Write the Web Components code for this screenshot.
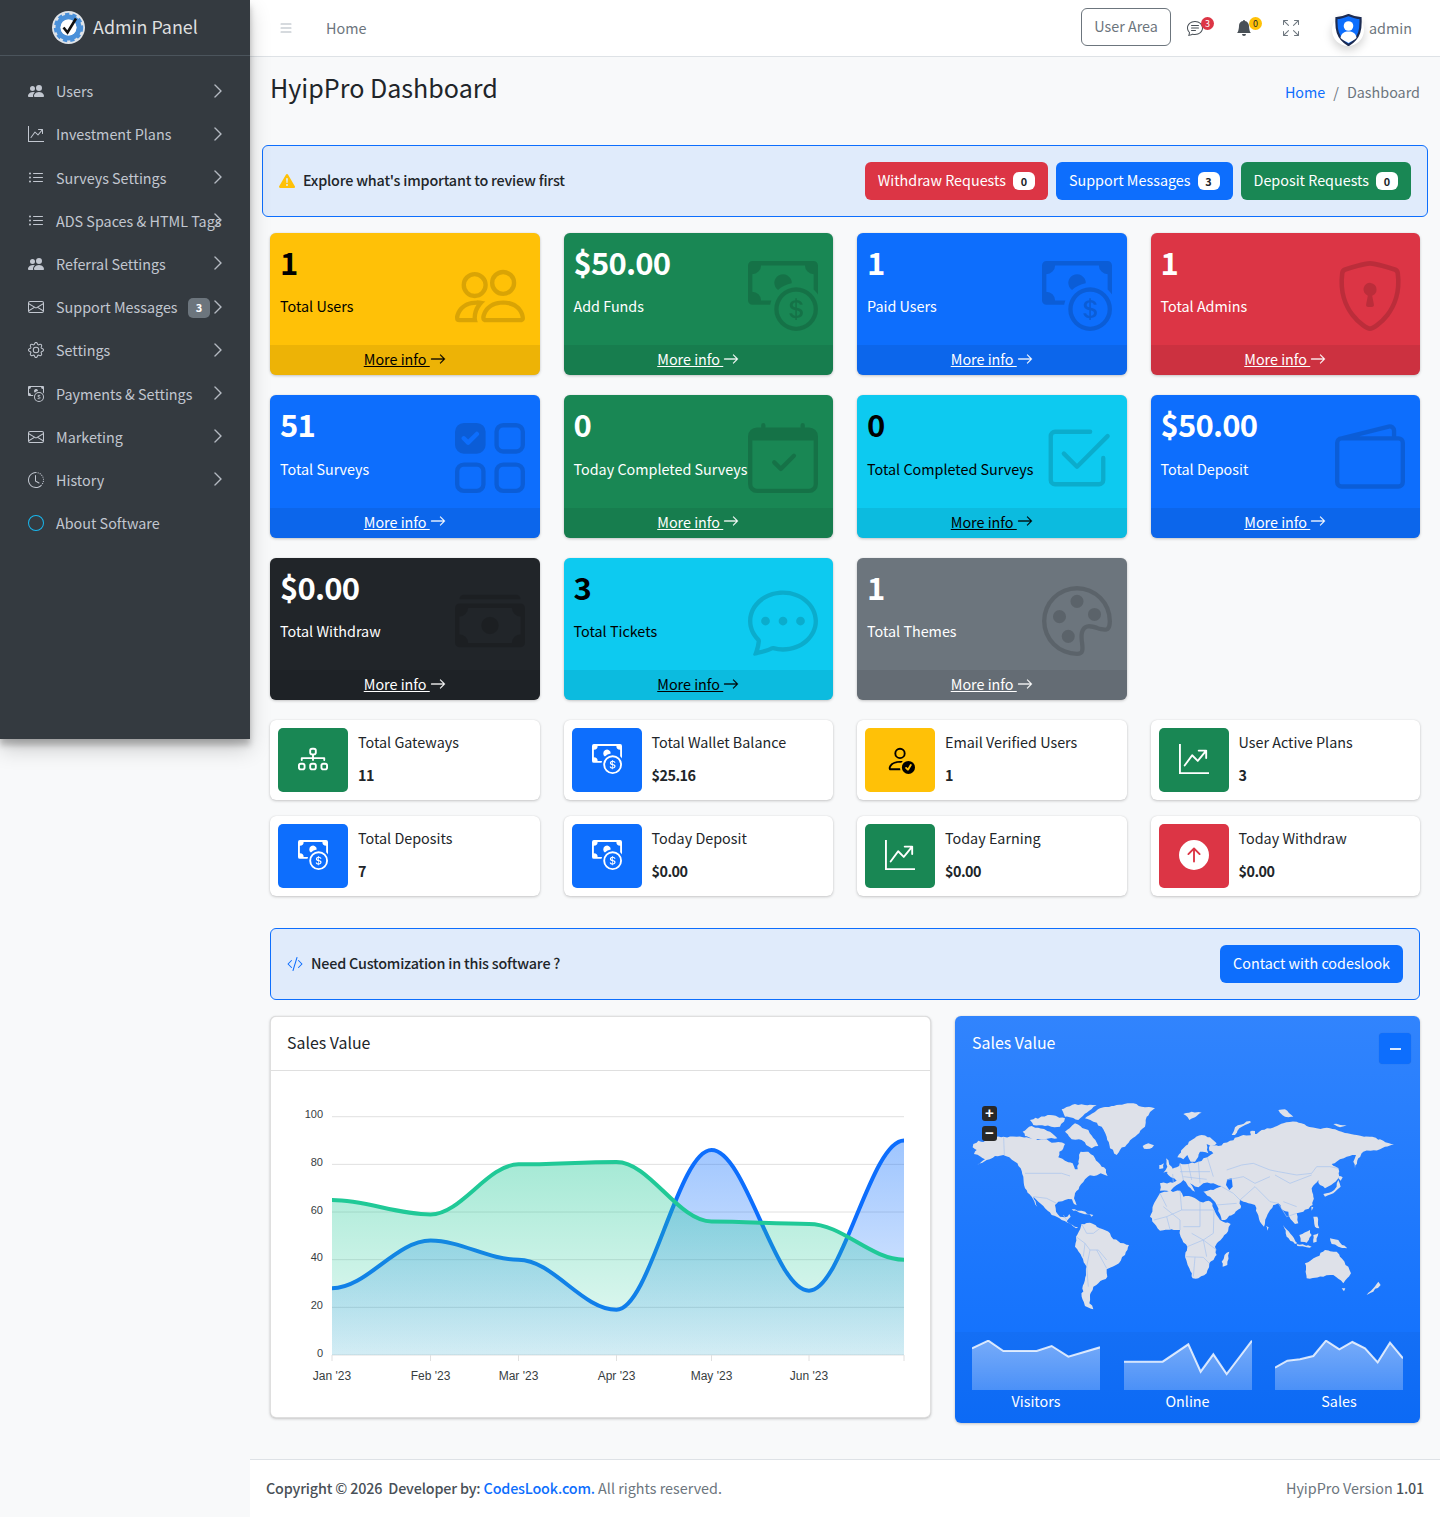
<!DOCTYPE html>
<html lang="en">
<head>
<meta charset="utf-8">
<title>HyipPro Dashboard</title>
<style>
  html, body { margin: 0; background: #f8f9fa; }
  body { font: 400 14.35px/24px "Noto Sans CJK SC", "Noto Sans", sans-serif; color: #212529; }
  app-shell { width: 1440px; }
</style>
</head>
<body>
<app-shell>
  <admin-sidebar slot="side"></admin-sidebar>
  <top-nav></top-nav>
  <page-head></page-head>
  <notice-bar wide text="Explore what's important to review first" icon="warn">
    <action-button tone="danger" count="0">Withdraw Requests</action-button>
    <action-button tone="primary" count="3">Support Messages</action-button>
    <action-button tone="success" count="0">Deposit Requests</action-button>
  </notice-bar>
  <card-grid class="stats">
    <stat-box tone="warning" value="1" icon="people">Total Users</stat-box>
    <stat-box tone="success" value="$50.00" icon="cash-coin">Add Funds</stat-box>
    <stat-box tone="primary" value="1" icon="cash-coin">Paid Users</stat-box>
    <stat-box tone="danger" value="1" icon="shield-lock">Total Admins</stat-box>
    <stat-box tone="primary" value="51" icon="ui-checks-grid">Total Surveys</stat-box>
    <stat-box tone="success" value="0" icon="calendar-check">Today Completed Surveys</stat-box>
    <stat-box tone="info" value="0" icon="check2-square">Total Completed Surveys</stat-box>
    <stat-box tone="primary" value="$50.00" icon="wallet2">Total Deposit</stat-box>
    <stat-box tone="dark" value="$0.00" icon="cash-stack">Total Withdraw</stat-box>
    <stat-box tone="info" value="3" icon="chat-dots">Total Tickets</stat-box>
    <stat-box tone="secondary" value="1" icon="palette">Total Themes</stat-box>
  </card-grid>
  <card-grid class="infos">
    <info-box tone="success" icon="diagram-3" label="Total Gateways" value="11"></info-box>
    <info-box tone="primary" icon="cash-coin" label="Total Wallet Balance" value="$25.16"></info-box>
    <info-box tone="warning" icon="person-check" label="Email Verified Users" value="1"></info-box>
    <info-box tone="success" icon="graph-up-arrow" label="User Active Plans" value="3"></info-box>
    <info-box tone="primary" icon="cash-coin" label="Total Deposits" value="7"></info-box>
    <info-box tone="primary" icon="cash-coin" label="Today Deposit" value="$0.00"></info-box>
    <info-box tone="success" icon="graph-up-arrow" label="Today Earning" value="$0.00"></info-box>
    <info-box tone="danger" icon="arrow-up-circle-fill" label="Today Withdraw" value="$0.00"></info-box>
  </card-grid>
  <notice-bar text="Need Customization in this software ?" icon="code-slash">
    <action-button tone="primary">Contact with codeslook</action-button>
  </notice-bar>
  <chart-row>
    <sales-chart></sales-chart>
    <map-card></map-card>
  </chart-row>
  <page-footer></page-footer>
</app-shell>

<script>
const ICONS = {
  'people-fill': '<path d="M7 14s-1 0-1-1 1-4 5-4 5 3 5 4-1 1-1 1zm4-6a3 3 0 1 0 0-6 3 3 0 0 0 0 6m-5.784 6A2.24 2.24 0 0 1 5 13c0-1.355.68-2.75 1.936-3.72A6.3 6.3 0 0 0 5 9c-4 0-5 3-5 4s1 1 1 1zM4.5 8a2.5 2.5 0 1 0 0-5 2.5 2.5 0 0 0 0 5"/>',
  'people': '<path d="M15 14s1 0 1-1-1-4-5-4-5 3-5 4 1 1 1 1zm-7.978-1L7 12.996c.001-.264.167-1.03.76-1.72C8.312 10.629 9.282 10 11 10c1.717 0 2.687.63 3.24 1.276.593.69.758 1.457.76 1.72l-.008.002-.014.002zM11 7a2 2 0 1 0 0-4 2 2 0 0 0 0 4m3-2a3 3 0 1 1-6 0 3 3 0 0 1 6 0M6.936 9.28a6 6 0 0 0-1.23-.247A7 7 0 0 0 5 9c-4 0-5 3-5 4q0 1 1 1h4.216A2.24 2.24 0 0 1 5 13c0-1.01.377-2.042 1.09-2.904.243-.294.526-.569.846-.816M4.92 10A5.5 5.5 0 0 0 4 13H1c0-.26.164-1.03.76-1.724.545-.636 1.492-1.256 3.16-1.275ZM1.5 5.5a3 3 0 1 1 6 0 3 3 0 0 1-6 0m3-2a2 2 0 1 0 0 4 2 2 0 0 0 0-4"/>',
  'cash-coin': '<path fill-rule="evenodd" d="M11 15a4 4 0 1 0 0-8 4 4 0 0 0 0 8m5-4a5 5 0 1 1-10 0 5 5 0 0 1 10 0"/><path d="M9.438 11.944c.047.596.518 1.06 1.363 1.116v.44h.375v-.443c.875-.061 1.386-.529 1.386-1.207 0-.618-.39-.936-1.09-1.1l-.296-.07v-1.2c.376.043.614.248.671.532h.658c-.047-.575-.54-1.024-1.329-1.073V8.5h-.375v.45c-.747.073-1.255.522-1.255 1.158 0 .562.378.92 1.007 1.066l.248.061v1.272c-.384-.058-.639-.27-.696-.563h-.668zm1.36-1.354c-.369-.085-.569-.26-.569-.522 0-.294.216-.514.572-.578v1.1zm.432.746c.449.104.655.272.655.569 0 .339-.257.571-.709.614v-1.195z"/><path d="M1 0a1 1 0 0 0-1 1v8a1 1 0 0 0 1 1h4.083q.088-.517.258-1H3a2 2 0 0 0-2-2V3a2 2 0 0 0 2-2h10a2 2 0 0 0 2 2v3.528c.38.34.717.728 1 1.154V1a1 1 0 0 0-1-1z"/><path d="M9.998 5.083 10 5a2 2 0 1 0-3.132 1.65 6 6 0 0 1 3.13-1.567"/>',
  'shield-lock': '<path d="M5.338 1.59a61 61 0 0 0-2.837.856.48.48 0 0 0-.328.39c-.554 4.157.726 7.19 2.253 9.188a10.7 10.7 0 0 0 2.287 2.233c.346.244.652.42.893.533q.18.085.293.118a1 1 0 0 0 .101.025 1 1 0 0 0 .1-.025q.114-.034.294-.118c.24-.113.547-.29.893-.533a10.7 10.7 0 0 0 2.287-2.233c1.527-1.997 2.807-5.031 2.253-9.188a.48.48 0 0 0-.328-.39c-.651-.213-1.75-.56-2.837-.855C9.552 1.29 8.531 1.067 8 1.067c-.53 0-1.552.223-2.662.524zM5.072.56C6.157.265 7.31 0 8 0s1.843.265 2.928.56c1.11.3 2.229.655 2.887.87a1.54 1.54 0 0 1 1.044 1.262c.596 4.477-.787 7.795-2.465 9.99a11.8 11.8 0 0 1-2.517 2.453 7 7 0 0 1-1.048.625c-.28.132-.581.24-.829.24s-.548-.108-.829-.24a7 7 0 0 1-1.048-.625 11.8 11.8 0 0 1-2.517-2.453C1.928 10.487.545 7.169 1.141 2.692A1.54 1.54 0 0 1 2.185 1.43 63 63 0 0 1 5.072.56"/><path d="M9.5 6.5a1.5 1.5 0 0 1-1 1.415l.385 1.99a.5.5 0 0 1-.491.595h-.788a.5.5 0 0 1-.49-.595l.384-1.99a1.5 1.5 0 1 1 2-1.415"/>',
  'ui-checks-grid': '<path d="M2 10h3a1 1 0 0 1 1 1v3a1 1 0 0 1-1 1H2a1 1 0 0 1-1-1v-3a1 1 0 0 1 1-1m9-9h3a1 1 0 0 1 1 1v3a1 1 0 0 1-1 1h-3a1 1 0 0 1-1-1V2a1 1 0 0 1 1-1m0 9a1 1 0 0 0-1 1v3a1 1 0 0 0 1 1h3a1 1 0 0 0 1-1v-3a1 1 0 0 0-1-1zm0-10a2 2 0 0 0-2 2v3a2 2 0 0 0 2 2h3a2 2 0 0 0 2-2V2a2 2 0 0 0-2-2zM2 9a2 2 0 0 0-2 2v3a2 2 0 0 0 2 2h3a2 2 0 0 0 2-2v-3a2 2 0 0 0-2-2zm7 2a2 2 0 0 1 2-2h3a2 2 0 0 1 2 2v3a2 2 0 0 1-2 2h-3a2 2 0 0 1-2-2zM0 2a2 2 0 0 1 2-2h3a2 2 0 0 1 2 2v3a2 2 0 0 1-2 2H2a2 2 0 0 1-2-2zm5.354.854a.5.5 0 1 0-.708-.708L3 3.793l-.646-.647a.5.5 0 1 0-.708.708l1 1a.5.5 0 0 0 .708 0z"/>',
  'calendar-check': '<path d="M10.854 7.146a.5.5 0 0 1 0 .708l-3 3a.5.5 0 0 1-.708 0l-1.5-1.5a.5.5 0 1 1 .708-.708L7.5 9.793l2.646-2.647a.5.5 0 0 1 .708 0"/><path d="M3.5 0a.5.5 0 0 1 .5.5V1h8V.5a.5.5 0 0 1 1 0V1h1a2 2 0 0 1 2 2v11a2 2 0 0 1-2 2H2a2 2 0 0 1-2-2V3a2 2 0 0 1 2-2h1V.5a.5.5 0 0 1 .5-.5M1 4v10a1 1 0 0 0 1 1h12a1 1 0 0 0 1-1V4z"/>',
  'check2-square': '<path d="M3 14.5A1.5 1.5 0 0 1 1.5 13V3A1.5 1.5 0 0 1 3 1.5h8a.5.5 0 0 1 0 1H3a.5.5 0 0 0-.5.5v10a.5.5 0 0 0 .5.5h10a.5.5 0 0 0 .5-.5V8a.5.5 0 0 1 1 0v5a1.5 1.5 0 0 1-1.5 1.5z"/><path d="M8.354 10.354l7-7a.5.5 0 0 0-.708-.708L8 9.293 5.354 6.646a.5.5 0 1 0-.708.708l3 3a.5.5 0 0 0 .708 0"/>',
  'wallet2': '<path d="M12.136.326A1.5 1.5 0 0 1 14 1.78V3h.5A1.5 1.5 0 0 1 16 4.5v9a1.5 1.5 0 0 1-1.5 1.5h-13A1.5 1.5 0 0 1 0 13.5v-9a1.5 1.5 0 0 1 1.432-1.499zM5.562 3H13V1.78a.5.5 0 0 0-.621-.484zM1.5 4a.5.5 0 0 0-.5.5v9a.5.5 0 0 0 .5.5h13a.5.5 0 0 0 .5-.5v-9a.5.5 0 0 0-.5-.5z"/>',
  'cash-stack': '<path d="M1 3a1 1 0 0 1 1-1h12a1 1 0 0 1 1 1zm7 8a2 2 0 1 0 0-4 2 2 0 0 0 0 4"/><path d="M0 5a1 1 0 0 1 1-1h14a1 1 0 0 1 1 1v8a1 1 0 0 1-1 1H1a1 1 0 0 1-1-1zm3 0a2 2 0 0 1-2 2v4a2 2 0 0 1 2 2h10a2 2 0 0 1 2-2V7a2 2 0 0 1-2-2z"/>',
  'chat-dots': '<path d="M5 8a1 1 0 1 1-2 0 1 1 0 0 1 2 0m4 0a1 1 0 1 1-2 0 1 1 0 0 1 2 0m3 1a1 1 0 1 0 0-2 1 1 0 0 0 0 2"/><path d="m2.165 15.803.02-.004c1.83-.363 2.948-.842 3.468-1.105A9 9 0 0 0 8 15c4.418 0 8-3.134 8-7s-3.582-7-8-7-8 3.134-8 7c0 1.76.743 3.37 1.97 4.6a10.4 10.4 0 0 1-.524 2.318l-.003.011a11 11 0 0 1-.244.637c-.079.186.074.394.273.362a22 22 0 0 0 .693-.125m.8-3.108a1 1 0 0 0-.287-.801C1.618 10.83 1 9.468 1 8c0-3.192 3.004-6 7-6s7 2.808 7 6-3.004 6-7 6a8 8 0 0 1-2.088-.272 1 1 0 0 0-.711.074c-.387.196-1.24.57-2.634.893a11 11 0 0 0 .398-2"/>',
  'chat-text': '<path d="M2.678 11.894a1 1 0 0 1 .287.801 11 11 0 0 1-.398 2c1.395-.323 2.247-.697 2.634-.893a1 1 0 0 1 .71-.074A8 8 0 0 0 8 14c3.996 0 7-2.807 7-6s-3.004-6-7-6-7 2.808-7 6c0 1.468.617 2.83 1.678 3.894m-.493 3.905a22 22 0 0 1-.713.129c-.2.032-.352-.176-.273-.362a10 10 0 0 0 .244-.637l.003-.01c.248-.72.45-1.548.524-2.319C.743 11.37 0 9.76 0 8c0-3.866 3.582-7 8-7s8 3.134 8 7-3.582 7-8 7a9 9 0 0 1-2.347-.306c-.52.263-1.639.742-3.468 1.105"/><path d="M4 5.5a.5.5 0 0 1 .5-.5h7a.5.5 0 0 1 0 1h-7a.5.5 0 0 1-.5-.5M4 8a.5.5 0 0 1 .5-.5h7a.5.5 0 0 1 0 1h-7A.5.5 0 0 1 4 8m0 2.5a.5.5 0 0 1 .5-.5h4a.5.5 0 0 1 0 1h-4a.5.5 0 0 1-.5-.5"/>',
  'palette': '<path d="M8 5a1.5 1.5 0 1 0 0-3 1.5 1.5 0 0 0 0 3m4 3a1.5 1.5 0 1 0 0-3 1.5 1.5 0 0 0 0 3M5.5 7a1.5 1.5 0 1 1-3 0 1.5 1.5 0 0 1 3 0m.5 6a1.5 1.5 0 1 0 0-3 1.5 1.5 0 0 0 0 3"/><path d="M16 8c0 3.15-1.866 2.585-3.567 2.07C11.42 9.763 10.465 9.473 10 10c-.603.683-.475 1.819-.351 2.92C9.826 14.495 9.996 16 8 16a8 8 0 1 1 8-8m-8 7c.611 0 .654-.171.655-.176.078-.146.124-.464.07-1.119-.014-.168-.037-.37-.061-.591-.052-.464-.112-1.005-.118-1.462-.01-.707.083-1.61.704-2.314.369-.417.845-.578 1.272-.618.404-.038.812.026 1.16.104.343.077.702.186 1.025.284l.028.008c.346.105.658.199.953.266.653.148.904.083.991.024C14.717 9.38 15 9.161 15 8a7 7 0 1 0-7 7"/>',
  'graph-up-arrow': '<path fill-rule="evenodd" d="M0 0h1v15h15v1H0zm10 3.5a.5.5 0 0 1 .5-.5h4a.5.5 0 0 1 .5.5v4a.5.5 0 0 1-1 0V4.9l-3.613 4.417a.5.5 0 0 1-.74.037L7.06 6.767l-3.656 5.027a.5.5 0 0 1-.808-.588l4-5.5a.5.5 0 0 1 .758-.06l2.609 2.61L13.445 4H10.5a.5.5 0 0 1-.5-.5"/>',
  'list-ul': '<path fill-rule="evenodd" d="M5 11.5a.5.5 0 0 1 .5-.5h9a.5.5 0 0 1 0 1h-9a.5.5 0 0 1-.5-.5m0-4a.5.5 0 0 1 .5-.5h9a.5.5 0 0 1 0 1h-9a.5.5 0 0 1-.5-.5m0-4a.5.5 0 0 1 .5-.5h9a.5.5 0 0 1 0 1h-9a.5.5 0 0 1-.5-.5m-3 1a1 1 0 1 0 0-2 1 1 0 0 0 0 2m0 4a1 1 0 1 0 0-2 1 1 0 0 0 0 2m0 4a1 1 0 1 0 0-2 1 1 0 0 0 0 2"/>',
  'envelope': '<path d="M0 4a2 2 0 0 1 2-2h12a2 2 0 0 1 2 2v8a2 2 0 0 1-2 2H2a2 2 0 0 1-2-2zm2-1a1 1 0 0 0-1 1v.217l7 4.2 7-4.2V4a1 1 0 0 0-1-1zm13 2.383-4.708 2.825L15 11.105zm-.034 6.876-5.64-3.471L8 9.583l-1.326-.795-5.64 3.47A1 1 0 0 0 2 13h12a1 1 0 0 0 .966-.741M1 11.105l4.708-2.897L1 5.383z"/>',
  'gear': '<path d="M8 4.754a3.246 3.246 0 1 0 0 6.492 3.246 3.246 0 0 0 0-6.492M5.754 8a2.246 2.246 0 1 1 4.492 0 2.246 2.246 0 0 1-4.492 0"/><path d="M9.796 1.343c-.527-1.79-3.065-1.79-3.592 0l-.094.319a.873.873 0 0 1-1.255.52l-.292-.16c-1.64-.892-3.433.902-2.54 2.541l.159.292a.873.873 0 0 1-.52 1.255l-.319.094c-1.79.527-1.79 3.065 0 3.592l.319.094a.873.873 0 0 1 .52 1.255l-.16.292c-.892 1.64.901 3.434 2.541 2.54l.292-.159a.873.873 0 0 1 1.255.52l.094.319c.527 1.79 3.065 1.79 3.592 0l.094-.319a.873.873 0 0 1 1.255-.52l.292.16c1.64.893 3.434-.902 2.54-2.541l-.159-.292a.873.873 0 0 1 .52-1.255l.319-.094c1.79-.527 1.79-3.065 0-3.592l-.319-.094a.873.873 0 0 1-.52-1.255l.16-.292c.893-1.64-.902-3.433-2.541-2.54l-.292.159a.873.873 0 0 1-1.255-.52zm-2.633.283c.246-.835 1.428-.835 1.674 0l.094.319a1.873 1.873 0 0 0 2.693 1.115l.291-.16c.764-.415 1.6.42 1.184 1.185l-.159.292a1.873 1.873 0 0 0 1.116 2.692l.318.094c.835.246.835 1.428 0 1.674l-.319.094a1.873 1.873 0 0 0-1.115 2.693l.16.291c.415.764-.42 1.6-1.185 1.184l-.291-.159a1.873 1.873 0 0 0-2.693 1.116l-.094.318c-.246.835-1.428.835-1.674 0l-.094-.319a1.873 1.873 0 0 0-2.692-1.115l-.292.16c-.764.415-1.6-.42-1.184-1.185l.159-.291A1.873 1.873 0 0 0 1.945 8.93l-.319-.094c-.835-.246-.835-1.428 0-1.674l.319-.094A1.873 1.873 0 0 0 3.06 4.377l-.16-.292c-.415-.764.42-1.6 1.185-1.184l.292.159a1.873 1.873 0 0 0 2.692-1.115z"/>',
  'clock-history': '<path d="M8.515 1.019A7 7 0 0 0 8 1V0a8 8 0 0 1 .589.022zm2.004.45a7 7 0 0 0-.985-.299l.219-.976q.576.129 1.126.342zm1.37.71a7 7 0 0 0-.439-.27l.493-.87a8 8 0 0 1 .979.654l-.615.789a7 7 0 0 0-.418-.302zm1.834 1.79a7 7 0 0 0-.653-.796l.724-.69q.406.429.747.91zm.744 1.352a7 7 0 0 0-.214-.468l.893-.45a8 8 0 0 1 .45 1.088l-.95.313a7 7 0 0 0-.179-.483m.53 2.507a7 7 0 0 0-.1-1.025l.985-.17q.1.58.116 1.17zm-.131 1.538q.05-.254.081-.51l.993.123a8 8 0 0 1-.23 1.155l-.964-.267q.069-.247.12-.501m-.952 2.379q.276-.436.486-.908l.914.405q-.24.54-.555 1.038zm-.964 1.205q.183-.183.35-.378l.758.653a8 8 0 0 1-.401.432z"/><path d="M8 1a7 7 0 1 0 4.95 11.95l.707.707A8.001 8.001 0 1 1 8 0z"/><path d="M7.5 3a.5.5 0 0 1 .5.5v5.21l3.248 1.856a.5.5 0 0 1-.496.868l-3.5-2A.5.5 0 0 1 7 9V3.5a.5.5 0 0 1 .5-.5"/>',
  'chevron-right': '<path fill-rule="evenodd" stroke="currentColor" stroke-width=".4" d="M4.646 1.646a.5.5 0 0 1 .708 0l6 6a.5.5 0 0 1 0 .708l-6 6a.5.5 0 0 1-.708-.708L10.293 8 4.646 2.354a.5.5 0 0 1 0-.708"/>',
  'arrow-right': '<path fill-rule="evenodd" stroke="currentColor" stroke-width=".3" d="M1 8a.5.5 0 0 1 .5-.5h11.793l-3.147-3.146a.5.5 0 0 1 .708-.708l4 4a.5.5 0 0 1 0 .708l-4 4a.5.5 0 0 1-.708-.708L13.293 8.5H1.5A.5.5 0 0 1 1 8"/>',
  'diagram-3': '<path fill-rule="evenodd" d="M6 3.5A1.5 1.5 0 0 1 7.5 2h1A1.5 1.5 0 0 1 10 3.5v1A1.5 1.5 0 0 1 8.5 6v1H14a.5.5 0 0 1 .5.5v1a.5.5 0 0 1-1 0V8h-5v.5a.5.5 0 0 1-1 0V8h-5v.5a.5.5 0 0 1-1 0v-1A.5.5 0 0 1 2 7h5.5V6A1.5 1.5 0 0 1 6 4.5zM8.5 5a.5.5 0 0 0 .5-.5v-1a.5.5 0 0 0-.5-.5h-1a.5.5 0 0 0-.5.5v1a.5.5 0 0 0 .5.5zM0 11.5A1.5 1.5 0 0 1 1.5 10h1A1.5 1.5 0 0 1 4 11.5v1A1.5 1.5 0 0 1 2.5 14h-1A1.5 1.5 0 0 1 0 12.5zm1.5-.5a.5.5 0 0 0-.5.5v1a.5.5 0 0 0 .5.5h1a.5.5 0 0 0 .5-.5v-1a.5.5 0 0 0-.5-.5zm4.5.5A1.5 1.5 0 0 1 7.5 10h1a1.5 1.5 0 0 1 1.5 1.5v1A1.5 1.5 0 0 1 8.5 14h-1A1.5 1.5 0 0 1 6 12.5zm1.5-.5a.5.5 0 0 0-.5.5v1a.5.5 0 0 0 .5.5h1a.5.5 0 0 0 .5-.5v-1a.5.5 0 0 0-.5-.5zm4.5.5a1.5 1.5 0 0 1 1.5-1.5h1a1.5 1.5 0 0 1 1.5 1.5v1a1.5 1.5 0 0 1-1.5 1.5h-1a1.5 1.5 0 0 1-1.5-1.5zm1.5-.5a.5.5 0 0 0-.5.5v1a.5.5 0 0 0 .5.5h1a.5.5 0 0 0 .5-.5v-1a.5.5 0 0 0-.5-.5z"/>',
  'person-check': '<path d="M12.5 16a3.5 3.5 0 1 0 0-7 3.5 3.5 0 0 0 0 7m1.679-4.493-1.335 2.226a.75.75 0 0 1-1.174.144l-.774-.773a.5.5 0 0 1 .708-.708l.547.548 1.17-1.951a.5.5 0 1 1 .858.514M11 5a3 3 0 1 1-6 0 3 3 0 0 1 6 0M8 7a2 2 0 1 0 0-4 2 2 0 0 0 0 4"/><path d="M8.256 14a4.5 4.5 0 0 1-.229-1.004H3c.001-.246.154-.986.832-1.664C4.484 10.68 5.711 10 8 10q.39 0 .74.025c.226-.341.496-.65.804-.918Q8.844 9.002 8 9c-5 0-6 3-6 4s1 1 1 1z"/>',
  'arrow-up-circle-fill': '<path d="M16 8A8 8 0 1 0 0 8a8 8 0 0 0 16 0m-7.5 3.5a.5.5 0 0 1-1 0V5.707L5.354 7.854a.5.5 0 1 1-.708-.708l3-3a.5.5 0 0 1 .708 0l3 3a.5.5 0 0 1-.708.708L8.5 5.707z"/>',
  'code-slash': '<path d="M10.478 1.647a.5.5 0 1 0-.956-.294l-4 13a.5.5 0 0 0 .956.294zM4.854 4.146a.5.5 0 0 1 0 .708L1.707 8l3.147 3.146a.5.5 0 0 1-.708.708l-3.5-3.5a.5.5 0 0 1 0-.708l3.5-3.5a.5.5 0 0 1 .708 0m6.292 0a.5.5 0 0 0 0 .708L14.293 8l-3.147 3.146a.5.5 0 0 0 .708.708l3.5-3.5a.5.5 0 0 0 0-.708l-3.5-3.5a.5.5 0 0 0-.708 0"/>',
  'warn': '<path d="M8.982 1.566a1.13 1.13 0 0 0-1.96 0L.165 13.233c-.457.778.091 1.767.98 1.767h13.713c.889 0 1.438-.99.98-1.767zM8 5c.535 0 .954.462.9.995l-.35 3.507a.552.552 0 0 1-1.1 0L7.1 5.995A.905.905 0 0 1 8 5m.002 6a1 1 0 1 1 0 2 1 1 0 0 1 0-2"/>',
  'bell-fill': '<path d="M8 16a2 2 0 0 0 2-2H6a2 2 0 0 0 2 2m.995-14.901a1 1 0 1 0-1.99 0A5 5 0 0 0 3 6c0 1.098-.5 6-2 7h14c-1.5-1-2-5.902-2-7 0-2.42-1.72-4.44-4.005-4.901"/>',
  'arrows-fullscreen': '<path fill-rule="evenodd" d="M5.828 10.172a.5.5 0 0 0-.707 0l-4.096 4.096V11.5a.5.5 0 0 0-1 0v3.975a.5.5 0 0 0 .5.5H4.5a.5.5 0 0 0 0-1H1.732l4.096-4.096a.5.5 0 0 0 0-.707m4.344 0a.5.5 0 0 1 .707 0l4.096 4.096V11.5a.5.5 0 1 1 1 0v3.975a.5.5 0 0 1-.5.5H11.5a.5.5 0 0 1 0-1h2.768l-4.096-4.096a.5.5 0 0 1 0-.707m0-4.344a.5.5 0 0 0 .707 0l4.096-4.096V4.5a.5.5 0 1 0 1 0V.525a.5.5 0 0 0-.5-.5H11.5a.5.5 0 0 0 0 1h2.768l-4.096 4.096a.5.5 0 0 0 0 .707m-4.344 0a.5.5 0 0 1-.707 0L1.025 1.732V4.5a.5.5 0 0 1-1 0V.525a.5.5 0 0 1 .5-.5H4.5a.5.5 0 0 1 0 1H1.732l4.096 4.096a.5.5 0 0 1 0 .707"/>',
  'list': '<path fill-rule="evenodd" d="M2.5 12a.5.5 0 0 1 .5-.5h10a.5.5 0 0 1 0 1H3a.5.5 0 0 1-.5-.5m0-4a.5.5 0 0 1 .5-.5h10a.5.5 0 0 1 0 1H3a.5.5 0 0 1-.5-.5m0-4a.5.5 0 0 1 .5-.5h10a.5.5 0 0 1 0 1H3a.5.5 0 0 1-.5-.5"/>',
  'circle': '<path d="M8 15A7 7 0 1 1 8 1a7 7 0 0 1 0 14m0 1A8 8 0 1 0 8 0a8 8 0 0 0 0 16"/>',
};

class BsIcon extends HTMLElement {
  connectedCallback() {
    const size = this.getAttribute('size') || 16;
    this.attachShadow({ mode: 'open' }).innerHTML = `
      <style>:host { display: inline-flex; line-height: 0; } svg { display: block; }</style>
      <svg width="${size}" height="${size}" viewBox="0 0 16 16" fill="currentColor">${ICONS[this.getAttribute('name')] || ''}</svg>`;
  }
}
customElements.define('bs-icon', BsIcon);

class AppShell extends HTMLElement {
  connectedCallback() {
    this.attachShadow({ mode: 'open' }).innerHTML = `
      <style>
        :host { display: grid; grid-template-columns: 250px 1190px; align-items: start; }
        .main { display: flex; flex-direction: column; }
      </style>
      <slot name="side"></slot>
      <div class="main"><slot></slot></div>`;
  }
}
customElements.define('app-shell', AppShell);

class AdminSidebar extends HTMLElement {
  connectedCallback() {
    const rows = [
      ['people-fill', 'Users'], ['graph-up-arrow', 'Investment Plans'], ['list-ul', 'Surveys Settings'],
      ['list-ul', 'ADS Spaces & HTML Tags'], ['people-fill', 'Referral Settings'], ['envelope', 'Support Messages', 3],
      ['gear', 'Settings'], ['cash-coin', 'Payments & Settings'], ['envelope', 'Marketing'], ['clock-history', 'History'],
    ];
    const items = rows.map(([icon, text, badge]) => `
      <a class="row"><bs-icon name="${icon}"></bs-icon><span>${text.replace('&', '&amp;')}</span>
        ${badge ? `<b class="badge">${badge}</b>` : ''}
        <bs-icon class="chev" name="chevron-right"></bs-icon></a>`).join('');
    this.attachShadow({ mode: 'open' }).innerHTML = `
      <style>
        :host { display: block; width: 250px; height: 739px; background: #343a40; color: #c2c7d0;
          box-shadow: 0 10px 20px rgba(0,0,0,.19), 0 6px 6px rgba(0,0,0,.23); position: relative; z-index: 2; }
        .brand { height: 55px; border-bottom: 1px solid #4b545c; display: flex; align-items: center; gap: 8px; padding-left: 52px;
          color: rgba(255,255,255,.85); font-size: 17.9px; line-height: 28px; }
        .brand span { margin-top: -4px; }
        .brand svg { display: block; flex: none; }
        nav { padding-top: 13.6px; display: flex; flex-direction: column; }
        .row { height: 43.2px; display: flex; align-items: center; gap: 12px; padding-left: 28px; position: relative; white-space: nowrap; }
        .row bs-icon:first-child { flex: none; }
        .chev { position: absolute; right: 24px; top: 13px; }
        .badge { position: absolute; left: 188px; top: 12px; width: 22px; height: 20px; border-radius: 5px; background: #6c757d; color: #fff;
          font-size: 11px; font-weight: 700; line-height: 19px; text-align: center; }
        .about bs-icon { color: #18b7ee; }
      </style>
      <div class="brand">
        <svg width="33" height="33" viewBox="0 0 33 33">
          <circle cx="16.5" cy="16.5" r="16.5" fill="#dfe3e8"/>
          <circle cx="16.5" cy="16.5" r="10.5" fill="none" stroke="#4a90d9" stroke-width="5"/>
          <circle cx="16.5" cy="16.5" r="13.2" fill="none" stroke="#4a90d9" stroke-width="3" stroke-dasharray="4.2 3.1"/>
          <circle cx="16.5" cy="16.5" r="8" fill="#fff"/>
          <path d="M11.5 16.5l4 5L24 7.5" fill="none" stroke="#111" stroke-width="2.6"/>
        </svg>
        <span>Admin Panel</span>
      </div>
      <nav>${items}<a class="row about"><bs-icon name="circle"></bs-icon><span>About Software</span></a></nav>`;
  }
}
customElements.define('admin-sidebar', AdminSidebar);

class TopNav extends HTMLElement {
  connectedCallback() {
    this.attachShadow({ mode: 'open' }).innerHTML = `
      <style>
        :host { display: flex; align-items: center; height: 56px; background: #fff; border-bottom: 1px solid #dee2e6; color: #6c757d; padding: 0 28px; }
        .burger { color: #adb5bd; margin-right: 32px; }
        .btn { margin-left: auto; border: 1px solid #6c757d; border-radius: 6px; height: 38px; width: 90px; box-sizing: border-box; display: flex; align-items: center; justify-content: center; margin-top: -2px; padding-bottom: 2px; }
        .ico { position: relative; display: flex; color: #495057; }
        .dot { position: absolute; width: 13px; height: 13px; border-radius: 50%; font-size: 9px; line-height: 13px; text-align: center; }
        .chat { margin-left: 16px; }
        .chat .dot { left: 14px; top: -3px; background: #dc3545; color: #fff; }
        .bell { margin-left: 33px; }
        .bell .dot { left: 13px; top: -3px; background: #ffc107; color: #212529; }
        .full { margin-left: 31px; color: #6c757d; }
        .ava { margin-left: 33px; width: 32px; height: 32px; border-radius: 50%; background: #fff; box-shadow: 0 4px 10px rgba(0,0,0,.18); margin-top: 3px; display: flex; align-items: center; justify-content: center; }
        .name { margin-left: 5px; }
      </style>
      <bs-icon class="burger" name="list"></bs-icon>
      <span>Home</span>
      <span class="btn">User Area</span>
      <span class="ico chat"><bs-icon name="chat-text"></bs-icon><span class="dot">3</span></span>
      <span class="ico bell"><bs-icon name="bell-fill"></bs-icon><span class="dot">0</span></span>
      <span class="ico full"><bs-icon name="arrows-fullscreen"></bs-icon></span>
      <span class="ava">
        <svg width="27" height="32" viewBox="0 0 27 32">
          <path d="M13.5 1C9 3 5 4 1.5 4 1 14 1.500 24 13.500 31 25.500 24 26 14 25.500 4 22 4 18 3 13.500 1Z" fill="#0d6efd" stroke="#1c2b52" stroke-width="2.200"/>
          <circle cx="13.500" cy="12" r="4.800" fill="#fff"/>
          <path d="M5.500 24c.5-5 4-6.500 8-6.500s7.500 1.500 8 6.500c-2.500 2-5 3.500-8 5-3-1.500-5.500-3-8-5Z" fill="#fff"/>
        </svg>
      </span>
      <span class="name">admin</span>`;
  }
}
customElements.define('top-nav', TopNav);

class PageHead extends HTMLElement {
  connectedCallback() {
    this.attachShadow({ mode: 'open' }).innerHTML = `
      <style>
        :host { display: flex; justify-content: space-between; height: 88px; padding: 0 20px; box-sizing: border-box; }
        h1 { margin: 11px 0 0; font-size: 25.1px; font-weight: 400; line-height: 38px; color: #212529; }
        .crumb { margin-top: 23px; color: #6c757d; }
        .crumb a { color: #0d6efd; }
        .crumb i { font-style: normal; padding: 0 8px; }
      </style>
      <h1>HyipPro Dashboard</h1>
      <div class="crumb"><a>Home</a><i>/</i>Dashboard</div>`;
  }
}
customElements.define('page-head', PageHead);

class NoticeBar extends HTMLElement {
  connectedCallback() {
    const warn = this.getAttribute('icon') === 'warn';
    this.attachShadow({ mode: 'open' }).innerHTML = `
      <style>
        :host { display: flex; align-items: center; height: 72px; box-sizing: border-box; margin: 0 20px; padding: 0 16px; gap: 8px;
          background: #e0ebfb; border: 1px solid #0d6efd; border-radius: 6px; }
        :host([wide]) { margin: 0 12px; }
        .ico { color: ${warn ? '#ffc107' : '#0d6efd'}; margin-top: -1px; }
        .txt { font-weight: 500; color: #212529; flex: 1; letter-spacing: -.2px; white-space: nowrap; margin-top: -2px; }
        .acts { display: flex; gap: 8px; }
      </style>
      <bs-icon class="ico" name="${this.getAttribute('icon')}"></bs-icon>
      <span class="txt">${this.getAttribute('text')}</span>
      <div class="acts"><slot></slot></div>`;
  }
}
customElements.define('notice-bar', NoticeBar);

class ActionButton extends HTMLElement {
  connectedCallback() {
    const count = this.getAttribute('count');
    this.attachShadow({ mode: 'open' }).innerHTML = `
      <style>
        :host { display: inline-flex; align-items: center; gap: 7px; height: 38px; padding: 0 13px 2px; border-radius: 6px; color: #fff; white-space: nowrap; box-sizing: border-box; }
        :host([tone=danger]) { background: #dc3545; }
        :host([tone=primary]) { background: #0d6efd; }
        :host([tone=success]) { background: #198754; }
        b { background: #fff; color: #212529; border-radius: 6px; font-size: 10.8px; font-weight: 700; line-height: 18px; width: 22px; text-align: center; margin-top: 2px; }
      </style>
      <slot></slot>${count !== null ? `<b>${count}</b>` : ''}`;
  }
}
customElements.define('action-button', ActionButton);

class CardGrid extends HTMLElement {
  connectedCallback() {
    const stats = this.classList.contains('stats');
    this.attachShadow({ mode: 'open' }).innerHTML = `
      <style>
        :host { display: grid; grid-template-columns: repeat(4, 269.5px); column-gap: 24px; row-gap: ${stats ? 20 : 16}px; padding: 0 20px; margin: ${stats ? '16px 0 20px' : '0 0 32px'}; }
      </style>
      <slot></slot>`;
  }
}
customElements.define('card-grid', CardGrid);

class StatBox extends HTMLElement {
  connectedCallback() {
    this.attachShadow({ mode: 'open' }).innerHTML = `
      <style>
        :host { display: flex; flex-direction: column; height: 142.400px; border-radius: 6px; overflow: hidden; position: relative; color: #fff;
          box-shadow: 0 0 1px rgba(0,0,0,.125), 0 1px 3px rgba(0,0,0,.2); }
        :host([tone=warning]) { background: #ffc107; color: #000; }
        :host([tone=success]) { background: #198754; }
        :host([tone=primary]) { background: #0d6efd; }
        :host([tone=danger]) { background: #dc3545; }
        :host([tone=info]) { background: #0dcaf0; color: #000; }
        :host([tone=dark]) { background: #212529; }
        :host([tone=secondary]) { background: #6c757d; }
        .body { flex: 1; padding: 8px 10px 0; white-space: nowrap; }
        h3 { margin: 0 0 11.400px; font-size: 31px; line-height: 42px; font-weight: 700; letter-spacing: -.8px; }
        p { margin: 0; }
        .bg { position: absolute; right: 15px; top: 28px; color: rgba(0,0,0,.15); }
        .more { height: 30px; background: rgba(0,0,0,.07); display: flex; align-items: center; justify-content: center; position: relative; padding-bottom: 2px; box-sizing: border-box; }
        .more u { white-space: pre; }
        .more bs-icon { margin-top: -1px; }
      </style>
      <div class="body"><h3>${this.getAttribute('value')}</h3><p><slot></slot></p></div>
      <bs-icon class="bg" name="${this.getAttribute('icon')}" size="70"></bs-icon>
      <div class="more"><u>More info </u><bs-icon name="arrow-right"></bs-icon></div>`;
  }
}
customElements.define('stat-box', StatBox);

class InfoBox extends HTMLElement {
  connectedCallback() {
    this.attachShadow({ mode: 'open' }).innerHTML = `
      <style>
        :host { display: flex; height: 80px; box-sizing: border-box; padding: 8px; gap: 10px; background: #fff; border-radius: 6px;
          box-shadow: 0 0 1px rgba(0,0,0,.125), 0 1px 3px rgba(0,0,0,.2); }
        .tile { width: 70px; height: 64px; flex: none; border-radius: 5px; display: flex; align-items: center; justify-content: center; color: #fff; }
        :host([tone=warning]) .tile { background: #ffc107; color: #000; }
        :host([tone=success]) .tile { background: #198754; }
        :host([tone=primary]) .tile { background: #0d6efd; }
        :host([tone=danger]) .tile { background: #dc3545; }
        .tile bs-icon { margin-top: -2px; }
        .txt { display: flex; flex-direction: column; gap: 9px; padding-top: 2px; }
        b { font-weight: 700; letter-spacing: -.5px; }
      </style>
      <div class="tile"><bs-icon name="${this.getAttribute('icon')}" size="30"></bs-icon></div>
      <div class="txt"><span>${this.getAttribute('label')}</span><b>${this.getAttribute('value')}</b></div>`;
  }
}
customElements.define('info-box', InfoBox);

class ChartRow extends HTMLElement {
  connectedCallback() {
    this.attachShadow({ mode: 'open' }).innerHTML = `
      <style>:host { display: grid; grid-template-columns: 661px 465px; gap: 24px; padding: 0 20px; align-items: start; margin-top: 16px; }</style>
      <slot></slot>`;
  }
}
customElements.define('chart-row', ChartRow);

class SalesChart extends HTMLElement {
  connectedCallback() {
    const xs = [332, 430.5, 518.5, 616.5, 711.5, 809, 904];
    const y = v => 1355 - v * 2.383;
    const line = vals => vals.map((v, i) => {
      if (!i) return `M${xs[0]} ${y(v)}`;
      const dx = xs[i] - xs[i - 1];
      return `C${xs[i - 1] + dx * .35} ${y(vals[i - 1])} ${xs[i] - dx * .35} ${y(v)} ${xs[i]} ${y(v)}`;
    }).join('');
    const area = vals => `${line(vals)}L904 1355L332 1355Z`;
    const green = [65, 59, 80, 81, 56, 55, 40], blue = [28, 48, 40, 19, 86, 27, 90];
    const labels = ["Jan '23", "Feb '23", "Mar '23", "Apr '23", "May '23", "Jun '23"];
    const grid = [0, 20, 40, 60, 80, 100].map(v => `
      <line x1="332" x2="904" y1="${y(v)}" y2="${y(v)}" stroke="#e0e0e0"/>
      <text x="323" y="${y(v) + 1.500}" text-anchor="end" class="yl">${v}</text>`).join('');
    const ticks = xs.map(x => `<line x1="${x}" x2="${x}" y1="1355" y2="1361" stroke="#e0e0e0"/>`).join('');
    const xl = labels.map((t, i) => `<text x="${xs[i]}" y="1380" text-anchor="middle" class="xl">${t}</text>`).join('');
    this.attachShadow({ mode: 'open' }).innerHTML = `
      <style>
        :host { display: block; height: 402px; background: #fff; border: 1px solid rgba(0,0,0,.125); border-radius: 6px; box-sizing: border-box; overflow: hidden;
          box-shadow: 0 0 1px rgba(0,0,0,.125), 0 1px 3px rgba(0,0,0,.2); }
        .head { height: 54px; box-sizing: border-box; border-bottom: 1px solid rgba(0,0,0,.125); padding: 0 16px 2px; display: flex; align-items: center; font-size: 15.9px; color: #212529; }
        svg { display: block; }
        text { font-family: "Liberation Sans", Arial, sans-serif; fill: #373d3f; }
        .yl { font-size: 11px; } .xl { font-size: 12px; }
      </style>
      <div class="head">Sales Value</div>
      <svg width="659" height="346" viewBox="271 1071 659 346">
        <defs>
          <linearGradient id="gb" x1="0" y1="0" x2="0" y2="1"><stop offset="0" stop-color="#0d6efd" stop-opacity=".4"/><stop offset="1" stop-color="#0d6efd" stop-opacity=".1"/></linearGradient>
          <linearGradient id="gg" x1="0" y1="0" x2="0" y2="1"><stop offset="0" stop-color="#20c997" stop-opacity=".4"/><stop offset="1" stop-color="#20c997" stop-opacity=".1"/></linearGradient>
          <clipPath id="plot"><rect x="332" y="1100" width="572" height="256"/></clipPath>
        </defs>
        ${grid}${ticks}${xl}
        <g clip-path="url(#plot)">
          <path d="${area(blue)}" fill="url(#gb)"/>
          <path d="${line(blue)}" fill="none" stroke="#0d6efd" stroke-width="4"/>
          <path d="${area(green)}" fill="url(#gg)"/>
          <path d="${line(green)}" fill="none" stroke="#20c997" stroke-width="4"/>
        </g>
      </svg>`;
  }
}
customElements.define('sales-chart', SalesChart);

class WorldMap extends HTMLElement {
  // roughen a straight edged outline so the coast does not look drawn with a ruler
  rough(d, seed) {
    const pts = d.slice(1, -1).split('L').map(p => p.split(' ').map(Number));
    let s = seed * 9301 + 49297;
    const rnd = () => { s = (s * 9301 + 49297) % 233280; return s / 233280 - .5; };
    const out = [];
    pts.forEach((p, i) => {
      const q = pts[(i + 1) % pts.length];
      const len = Math.hypot(q[0] - p[0], q[1] - p[1]);
      const steps = Math.max(1, Math.round(len / 9));
      for (let k = 0; k < steps; k++) {
        const t = k / steps, j = k ? 5 : 0;
        out.push(`${(p[0] + (q[0] - p[0]) * t + rnd() * j).toFixed(1)} ${(p[1] + (q[1] - p[1]) * t + rnd() * j).toFixed(1)}`);
      }
    });
    return `M${out.join('L')}Z`;
  }
  connectedCallback() {
    const land = [
      'M70 372L85 362L100 366L125 352L160 350L200 350L230 352L262 360L290 358L305 368L325 366L345 372L340 385L328 395L325 412L345 422L368 430L375 448L383 448L385 425L392 395L415 395L435 415L455 440L462 442L473 468L452 460L432 468L420 466L405 478L388 500L375 520L372 535L380 556L372 552L366 538L345 540L325 545L315 555L318 575L330 590L352 590L358 582L362 590L350 604L368 615L385 622L378 625L362 612L335 600L305 585L285 565L265 545L250 530L262 560L245 530L225 505L220 470L212 445L195 425L178 412L160 405L135 408L110 420L82 435L105 418L92 410L72 402L80 390L68 382Z',
      'M335 268L375 252L440 256L410 278L385 300L345 290Z', 'M345 335L375 310L415 330L445 378L425 385L395 360L365 358Z', 'M218 335L245 318L300 335L322 355L255 360L225 348Z', 'M240 300L300 285L345 295L330 320L285 318L250 315Z',
      'M405 295L450 265L500 255L550 250L585 262L615 265L590 290L585 320L555 350L510 390L500 405L480 385L470 350L455 320L430 305Z',
      'M578 378L595 370L612 376L600 386L582 386Z', 'M700 282L725 275L755 278L735 292L718 300Z', 'M985 270L1005 268L1030 290L1005 290Z', 'M845 345L855 322L900 303L903 307L868 325L855 345Z', 'M900 335L915 333L918 358L905 360Z', 'M1150 312L1190 316L1170 322Z',
      'M682 412L700 385L725 360L755 345L780 352L800 370L785 378L770 372L775 400L750 395L735 425L722 425L712 405L700 418Z',
      'M630 490L668 488L680 482L655 465L650 458L680 442L690 430L715 432L745 425L772 412L790 400L778 392L780 375L805 378L840 362L880 345L920 342L935 330L975 320L1000 310L1040 305L1070 318L1100 325L1140 325L1175 335L1220 345L1260 350L1300 362L1332 375L1305 380L1290 388L1262 392L1240 395L1225 415L1215 445L1210 425L1218 405L1190 410L1170 418L1145 432L1165 445L1168 470L1150 490L1125 505L1110 495L1105 480L1085 505L1090 530L1088 555L1060 575L1040 580L1045 610L1035 612L1022 598L1015 575L998 570L985 550L970 555L950 590L942 620L930 605L915 555L895 550L870 540L872 565L825 600L815 600L800 555L780 530L760 515L790 510L815 498L790 490L760 490L745 502L720 490L735 515L722 505L700 480L680 495L660 515L630 512Z',
      'M630 520L650 515L690 512L700 530L725 530L750 545L782 545L795 575L810 600L842 612L830 640L805 665L795 680L800 705L778 730L770 760L745 775L728 775L718 745L705 710L712 680L692 650L690 630L665 628L630 632L612 610L600 590L610 555Z',
      'M830 698L838 695L832 735L818 740L815 725Z',
      'M395 612L420 608L450 625L480 640L490 658L537 675L525 705L498 735L470 748L472 770L445 790L430 800L420 825L418 850L430 868L405 858L395 830L402 790L410 740L395 710L375 680L378 650Z',
      'M1065 730L1100 710L1125 690L1160 695L1170 710L1195 740L1203 760L1180 790L1150 765L1120 770L1070 775Z', 'M1175 805L1186 805L1182 814Z',
      'M1285 785L1292 795L1270 815L1250 825L1270 805Z', 'M1000 615L1020 640L1042 670L1035 672L1010 650Z', 'M1040 672L1085 680L1070 682L1042 678Z', 'M1048 645L1080 630L1085 645L1070 668L1052 665Z', 'M1090 645L1105 640L1100 665L1090 668Z', 'M1140 655L1165 660L1192 685L1165 680L1145 672Z', 'M1090 590L1102 590L1108 625L1095 620Z',
      'M1165 480L1172 500L1150 520L1125 530L1120 522L1145 515L1160 500Z', 'M1165 468L1178 472L1172 482Z', 'M1084 560L1090 562L1085 572Z', 'M948 618L956 622L952 632Z',
      'M365 568L395 572L420 585L395 580Z', 'M418 582L430 585L425 590Z', 'M648 415L665 440L668 455L640 458L652 440Z', 'M628 435L642 430L640 445L628 447Z',
    ];
    const borders = [
      'M225 460L335 460L360 468', 'M161 352L163 405', 'M250 530L290 535L320 550', 'M340 585L350 600',
      'M378 650L405 670L420 690L445 690L470 720', 'M395 612L410 640L430 640L450 625', 'M420 690L410 740L415 800', 'M440 690L470 745', 'M405 670L400 710',
      'M640 560L690 600L690 630', 'M690 512L695 570L750 570L792 570', 'M750 545L750 620L700 620', 'M695 570L650 590L612 600', 'M630 520L650 560', 'M792 570L790 640L760 660L725 640', 'M712 680L760 660L800 690', 'M705 710L760 712L778 730', 'M735 712L730 770', 'M760 660L770 710', 'M650 590L660 628',
      'M830 450L875 435L910 430L960 450L985 455L1040 465L1085 460L1100 440L1140 440L1165 445', 'M975 465L1020 490L1085 465', 'M830 480L880 470L915 490L960 470', 'M870 540L915 500L960 545L985 550', 'M815 500L850 520L870 540', 'M985 550L1010 590L1040 580', 'M1000 545L1040 560', 'M800 555L860 550',
      'M690 430L700 480', 'M715 432L725 480', 'M745 425L750 490', 'M690 455L780 455', 'M700 470L770 478', 'M772 412L790 470', 'M670 488L668 462',
    ];
    this.attachShadow({ mode: 'open' }).innerHTML = `
      <style>
        :host { display: block; position: relative; width: 426.670px; height: 213.330px; }
        svg { display: block; }
        .zoom { position: absolute; left: 12px; width: 15px; height: 15px; border-radius: 3px; background: #292929; color: #fff; font: 700 15px/14px "Liberation Sans", sans-serif; text-align: center; }
      </style>
      <svg width="426.670" height="213.330" viewBox="60 240 1280 640">
        <g fill="#dee1e9">${land.map((d, i) => `<path d="${this.rough(d, i + 1)}"/>`).join('')}</g>
        <path d="M832 478L845 475L848 500L838 510L828 495Z" fill="#1a75fe"/>
        <g fill="none" stroke="#a6c2ee" stroke-width="2">${borders.map(d => `<path d="${d}"/>`).join('')}</g>
      </svg>
      <span class="zoom" style="top:6px">+</span>
      <span class="zoom" style="top:26px">&minus;</span>`;
  }
}
customElements.define('world-map', WorldMap);

class MiniSpark extends HTMLElement {
  connectedCallback() {
    const pts = this.getAttribute('points');
    this.attachShadow({ mode: 'open' }).innerHTML = `
      <style>
        :host { display: flex; flex-direction: column; align-items: center; width: 128px; color: #fff; }
        svg { display: block; margin-bottom: -1px; }
      </style>
      <svg width="128" height="50" viewBox="0 0 384 150">
        <defs><linearGradient id="f" x1="0" y1="0" x2="0" y2="1"><stop offset="0" stop-color="#fff" stop-opacity=".42"/><stop offset="1" stop-color="#fff" stop-opacity=".25"/></linearGradient></defs>
        <polygon points="0,150 ${pts} 384,150" fill="url(#f)"/>
        <polyline points="${pts}" fill="none" stroke="#fff" stroke-opacity=".8" stroke-width="6"/>
      </svg>
      <slot></slot>`;
  }
}
customElements.define('mini-spark', MiniSpark);

class MapCard extends HTMLElement {
  connectedCallback() {
    this.attachShadow({ mode: 'open' }).innerHTML = `
      <style>
        :host { display: block; height: 407px; background: linear-gradient(180deg, #3184fd, #0d6efd); border-radius: 6px; color: #fff; overflow: hidden; position: relative;
          box-shadow: 0 0 1px rgba(0,0,0,.125), 0 1px 3px rgba(0,0,0,.2); }
        .head { height: 54px; display: flex; align-items: center; padding: 0 9px 0 17px; justify-content: space-between; font-size: 15.9px; }
        .min { width: 32px; height: 31px; background: #0d6efd; border-radius: 4px; display: flex; align-items: center; justify-content: center; margin-top: 11px; box-shadow: 0 0 1px rgba(0,0,0,.2); }
        .min i { width: 11px; height: 2px; background: rgba(255,255,255,.85); }
        .map { height: 262px; box-sizing: border-box; padding: 30px 0 0 15px; }
        .foot { height: 91px; padding: 8px 17px 0; box-sizing: border-box; display: flex; justify-content: space-between; background: rgba(0,0,0,.03); }
      </style>
      <div class="head"><span>Sales Value</span><span class="min"><i></i></span></div>
      <div class="map"><world-map></world-map></div>
      <div class="foot">
        <mini-spark points="0,25 49,2 94,33 194,33 239,18 289,50 384,22">Visitors</mini-spark>
        <mini-spark points="0,65 116,65 193,13 230,95 268,43 308,102 384,2">Online</mini-spark>
        <mini-spark points="0,83 37,62 75,58 115,48 153,2 193,28 232,6 270,25 308,67 345,8 384,55">Sales</mini-spark>
      </div>`;
  }
}
customElements.define('map-card', MapCard);

class PageFooter extends HTMLElement {
  connectedCallback() {
    this.attachShadow({ mode: 'open' }).innerHTML = `
      <style>
        :host { display: flex; justify-content: space-between; align-items: center; height: 58px; box-sizing: border-box; margin-top: 36px; padding: 0 16px 2px; background: #fff; border-top: 1px solid #dee2e6; color: #6c757d; white-space: pre; }
        b { font-weight: 500; color: #495057; letter-spacing: -.17px; }
        b a { color: #0d6efd; }
      </style>
      <span><b>Copyright © 2026  Developer by: <a>CodesLook.com.</a></b> All rights reserved.</span>
      <span>HyipPro Version <b>1.01</b></span>`;
  }
}
customElements.define('page-footer', PageFooter);
</script>
</body>
</html>
